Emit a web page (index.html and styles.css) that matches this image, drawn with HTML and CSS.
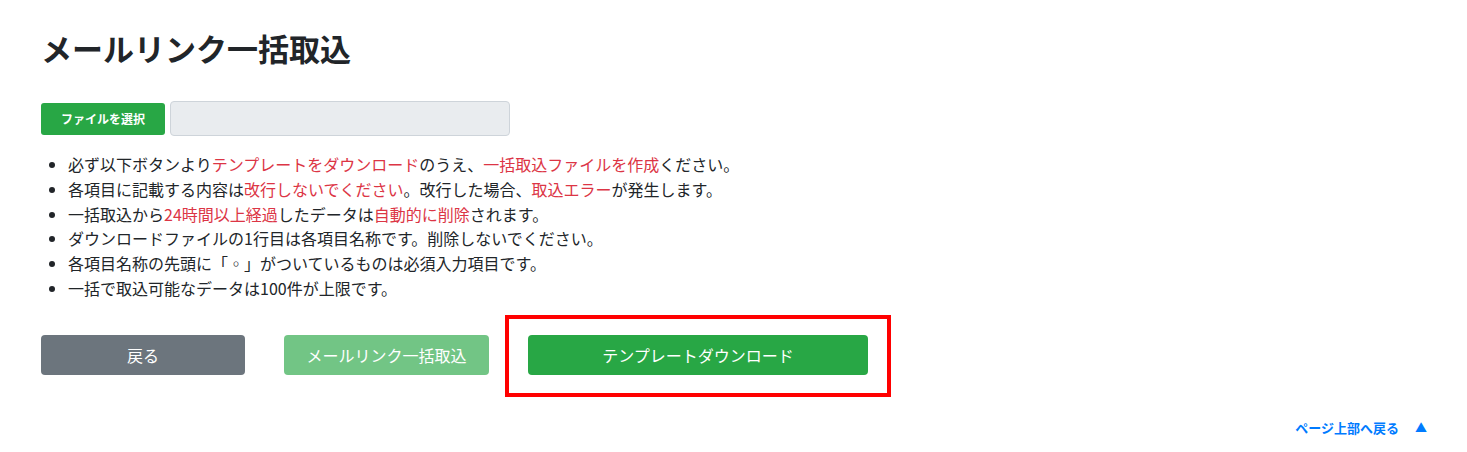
FILE: index.html
```html
<!DOCTYPE html>
<html lang="ja">
<head>
    <meta charset="UTF-8">
    <meta name="viewport" content="width=device-width, initial-scale=1.0">
    <title>メールリンク一括取込</title>
    <link rel="stylesheet" href="styles.css">
</head>
<body>

<div class="container">
    <h1>メールリンク一括取込</h1>

    <div class="file-row">
        <label class="file-btn">ファイルを選択</label>
        <div class="file-name"></div>
    </div>

    <ul class="notes">
        <li>必ず以下ボタンより<span class="red">テンプレートをダウンロード</span>のうえ、<span class="red">一括取込ファイルを作成</span>ください。</li>
        <li>各項目に記載する内容は<span class="red">改行しないでください</span>。改行した場合、<span class="red">取込エラー</span>が発生します。</li>
        <li>一括取込から<span class="red">24時間以上経過</span>したデータは<span class="red">自動的に削除</span>されます。</li>
        <li>ダウンロードファイルの1行目は各項目名称です。削除しないでください。</li>
        <li>各項目名称の先頭に「◦」がついているものは必須入力項目です。</li>
        <li>一括で取込可能なデータは100件が上限です。</li>
    </ul>

    <div class="actions">
        <button class="btn btn-back">戻る</button>
        <button class="btn btn-import" disabled>メールリンク一括取込</button>
        <div class="highlight">
            <button class="btn btn-download">テンプレートダウンロード</button>
        </div>
    </div>
</div>

<div class="page-top">
    <a href="#">ページ上部へ戻る<span class="arrow">▲</span></a>
</div>

</body>
</html>
```

FILE: styles.css
```css
body {
    font-family: "Noto Sans CJK JP", "Noto Sans", sans-serif;
    margin: 0;
    padding: 0;
    background-color: #ffffff;
    color: #212529;
}

.container {
    padding: 0 41px;
}

h1 {
    margin: 0;
    padding-top: 28px;
    font-size: 31px;
    line-height: 40px;
    font-weight: bold;
}

.file-row {
    display: flex;
    align-items: center;
    margin-top: 33px;
}

.file-btn {
    display: inline-block;
    width: 124px;
    height: 32px;
    line-height: 32px;
    text-align: center;
    background-color: #28a745;
    color: white;
    font-size: 12px;
    font-weight: bold;
    border-radius: 3px;
}

.file-name {
    width: 338px;
    height: 33px;
    margin-left: 5px;
    background-color: #e9ecef;
    border: 1px solid #ced4da;
    border-radius: 4px;
}

.notes {
    margin: 16px 0 0;
    padding-left: 27px;
    font-size: 16px;
    line-height: 24.8px;
}

.red {
    color: #dc3545;
}

.actions {
    display: flex;
    align-items: flex-start;
    margin-top: 14px;
}

.btn {
    height: 40px;
    border: none;
    border-radius: 4px;
    font-family: inherit;
    font-size: 16px;
    color: white;
    cursor: pointer;
}

.btn-back {
    width: 204px;
    margin-top: 20px;
    background-color: #6c757d;
}

.btn-import {
    width: 205px;
    margin-top: 20px;
    margin-left: 39px;
    background-color: #28a745;
    opacity: 0.65;
    cursor: default;
}

.highlight {
    margin-left: 16px;
    padding: 16px 19px 18px;
    border: 4px solid #ff0000;
}

.btn-download {
    display: block;
    width: 340px;
    background-color: #28a745;
}

.page-top {
    text-align: right;
    padding: 17px 40px 0 0;
}

.page-top a {
    color: #007bff;
    font-size: 13px;
    font-weight: bold;
    text-decoration: none;
}

.page-top .arrow {
    margin-left: 16px;
    font-size: 12px;
}
```
